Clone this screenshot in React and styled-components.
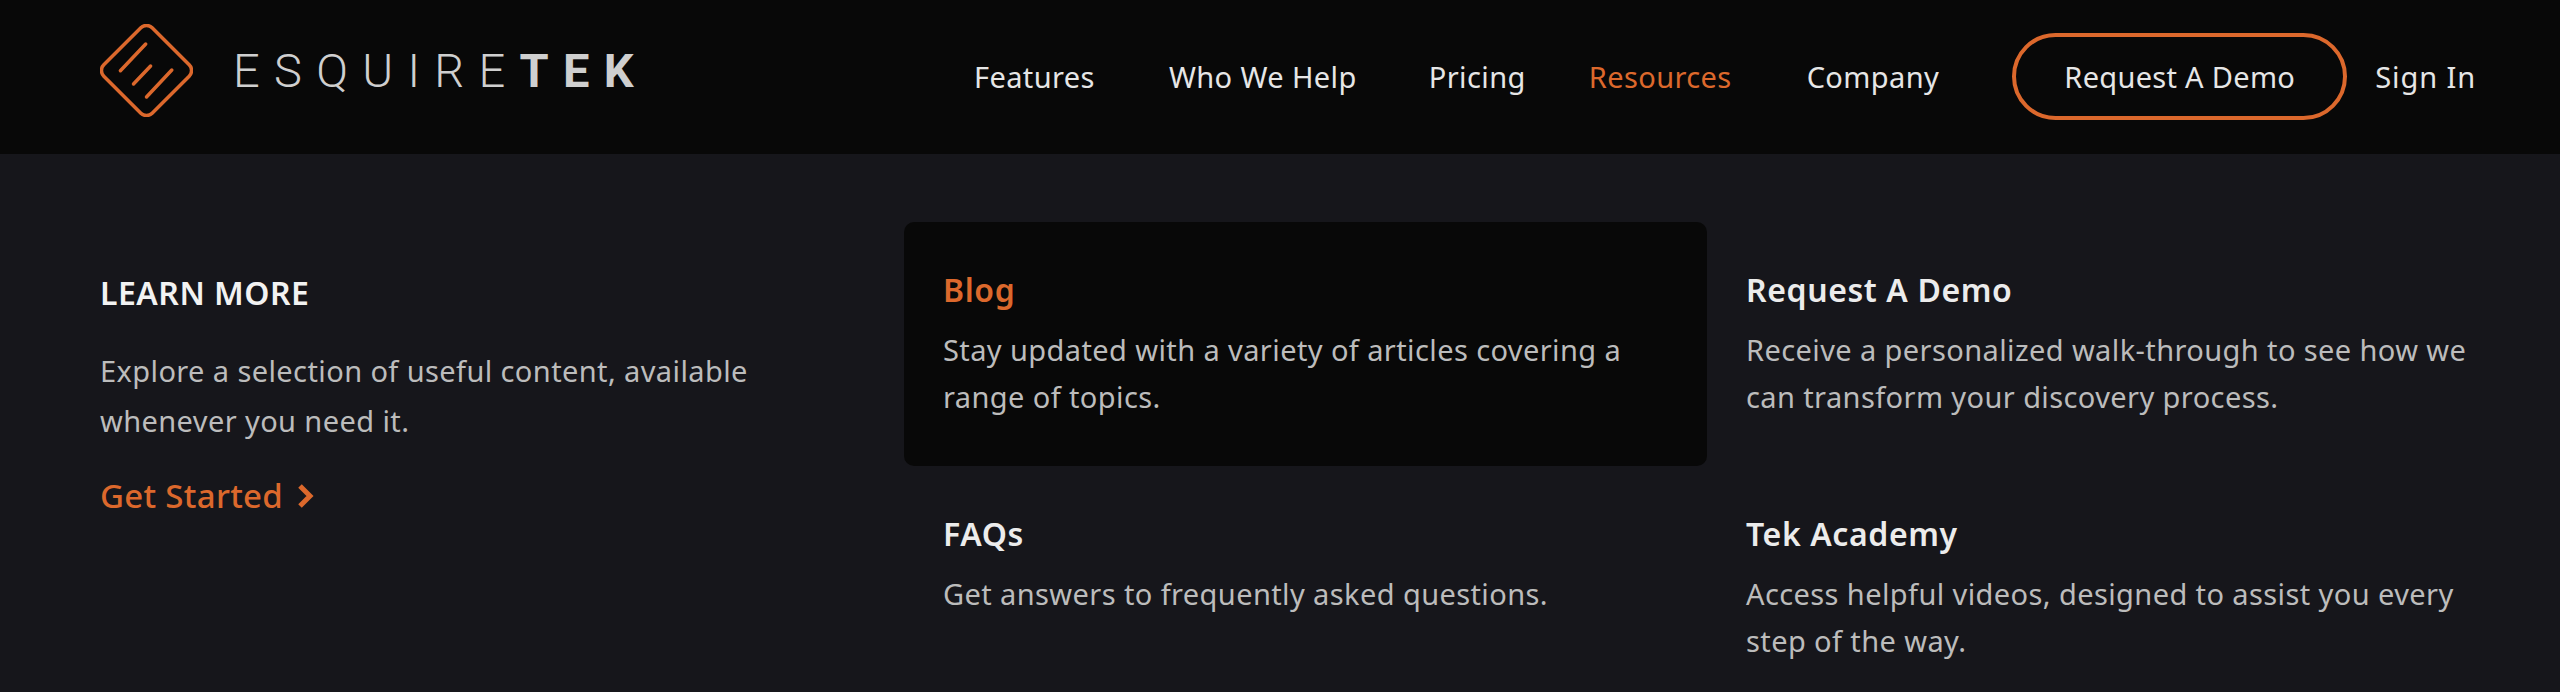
import React from 'react';
import styled, { createGlobalStyle } from 'styled-components';

const navItems = [
  { label: 'Features', gap: 0 },
  { label: 'Who We Help', gap: 74 },
  { label: 'Pricing', gap: 72 },
  { label: 'Resources', gap: 63, active: true },
  { label: 'Company', gap: 75 },
];

const resources = [
  { title: 'Blog', desc: 'Stay updated with a variety of articles covering a range of topics.', active: true },
  { title: 'Request A Demo', desc: 'Receive a personalized walk-through to see how we can transform your discovery process.' },
  { title: 'FAQs', desc: 'Get answers to frequently asked questions.' },
  { title: 'Tek Academy', desc: 'Access helpful videos, designed to assist you every step of the way.' },
];

const App = () => {
  return (
    <>
      <GlobalStyle />
      <Header>
        <Brand>
          <svg width="93" height="93" viewBox="0 0 93 93" fill="none" stroke="#dc682c" strokeWidth="3.5" strokeLinecap="round">
            <rect x="12.3" y="12.3" width="68.4" height="68.4" rx="8" transform="rotate(45 46.5 46.5)" />
            <path d="M45.7 20 L20.4 46.7" />
            <path d="M50.6 42 L33.5 60" />
            <path d="M71.8 46 L46.5 73" />
          </svg>
          <Wordmark>
            ESQUIRE<strong>TEK</strong>
          </Wordmark>
        </Brand>
        <Nav>
          {navItems.map((item) => (
            <NavLink key={item.label} $gap={item.gap} $active={item.active}>
              {item.label}
            </NavLink>
          ))}
          <DemoButton>Request A Demo</DemoButton>
          <SignIn>Sign In</SignIn>
        </Nav>
      </Header>
      <Panel>
        <Intro>
          <IntroTitle>LEARN MORE</IntroTitle>
          <IntroText>Explore a selection of useful content, available whenever you need it.</IntroText>
          <GetStarted>
            Get Started
            <svg width="18" height="26" viewBox="0 0 18 26" fill="none" stroke="#dc682c" strokeWidth="5">
              <path d="M3 3 L13 13 L3 23" />
            </svg>
          </GetStarted>
        </Intro>
        <CardGrid>
          {resources.map((item) => (
            <Card key={item.title} $active={item.active}>
              <CardTitle $active={item.active}>{item.title}</CardTitle>
              <CardText>{item.desc}</CardText>
            </Card>
          ))}
        </CardGrid>
      </Panel>
    </>
  );
};

export default App;

const GlobalStyle = createGlobalStyle`
  html, body {
    margin: 0;
    height: 692px;
    overflow: hidden;
    background-color: #16161b;
    font-family: 'Noto Sans', 'Open Sans', sans-serif;
  }
`;

const Header = styled.header`
  height: 154px;
  padding: 0 84px 0 100px;
  box-sizing: border-box;
  display: flex;
  justify-content: space-between;
  align-items: center;
  background-color: #080808;
`;

const Brand = styled.div`
  display: flex;
  align-items: center;
  gap: 40px;
  margin-top: -14px;
`;

const Wordmark = styled.div`
  font-family: 'Roboto', sans-serif;
  font-weight: 300;
  font-size: 47px;
  letter-spacing: 14.3px;
  color: #cfcfcf;
  strong {
    font-weight: 700;
  }
`;

const Nav = styled.nav`
  display: flex;
  align-items: center;
  margin-top: -2px;
`;

const NavLink = styled.a`
  margin-left: ${({ $gap }) => $gap}px;
  font-size: 29px;
  letter-spacing: 0.4px;
  color: ${({ $active }) => ($active ? '#dc682c' : '#e6e6e6')};
`;

const DemoButton = styled.button`
  margin-left: 73px;
  width: 335px;
  height: 87px;
  border: 4px solid #dc682c;
  border-radius: 44px;
  background: transparent;
  font-family: inherit;
  font-size: 29px;
  letter-spacing: 0.3px;
  color: #e6e6e6;
`;

const SignIn = styled.a`
  margin-left: 28px;
  font-size: 29px;
  letter-spacing: 0.9px;
  color: #e6e6e6;
`;

const Panel = styled.main`
  padding: 68px 50px 0 100px;
  display: flex;
  justify-content: space-between;
`;

const Intro = styled.section`
  width: 680px;
`;

const IntroTitle = styled.h2`
  margin: 51px 0 0;
  font-size: 32px;
  font-weight: 600;
  letter-spacing: 0.5px;
  line-height: 40px;
  color: #f2f2f2;
`;

const IntroText = styled.p`
  margin: 33px 0 0;
  font-size: 29px;
  letter-spacing: 0.4px;
  line-height: 50px;
  color: #bcbcbc;
`;

const GetStarted = styled.a`
  margin-top: 27px;
  display: flex;
  align-items: center;
  gap: 14px;
  font-size: 33px;
  letter-spacing: 0.3px;
  font-weight: 500;
  color: #dc682c;
`;

const CardGrid = styled.section`
  display: grid;
  grid-template-columns: 803px 803px;
  grid-auto-rows: 244px;
`;

const Card = styled.article`
  padding: 47px 39px 0;
  box-sizing: border-box;
  border-radius: 10px;
  background-color: ${({ $active }) => ($active ? '#080808' : 'transparent')};
`;

const CardTitle = styled.h3`
  margin: 0;
  font-size: 32px;
  font-weight: 600;
  letter-spacing: 0.6px;
  line-height: 42px;
  color: ${({ $active }) => ($active ? '#dc682c' : '#ececec')};
`;

const CardText = styled.p`
  margin: 15px 0 0;
  font-size: 29px;
  letter-spacing: 0.4px;
  line-height: 47px;
  color: #bcbcbc;
`;
